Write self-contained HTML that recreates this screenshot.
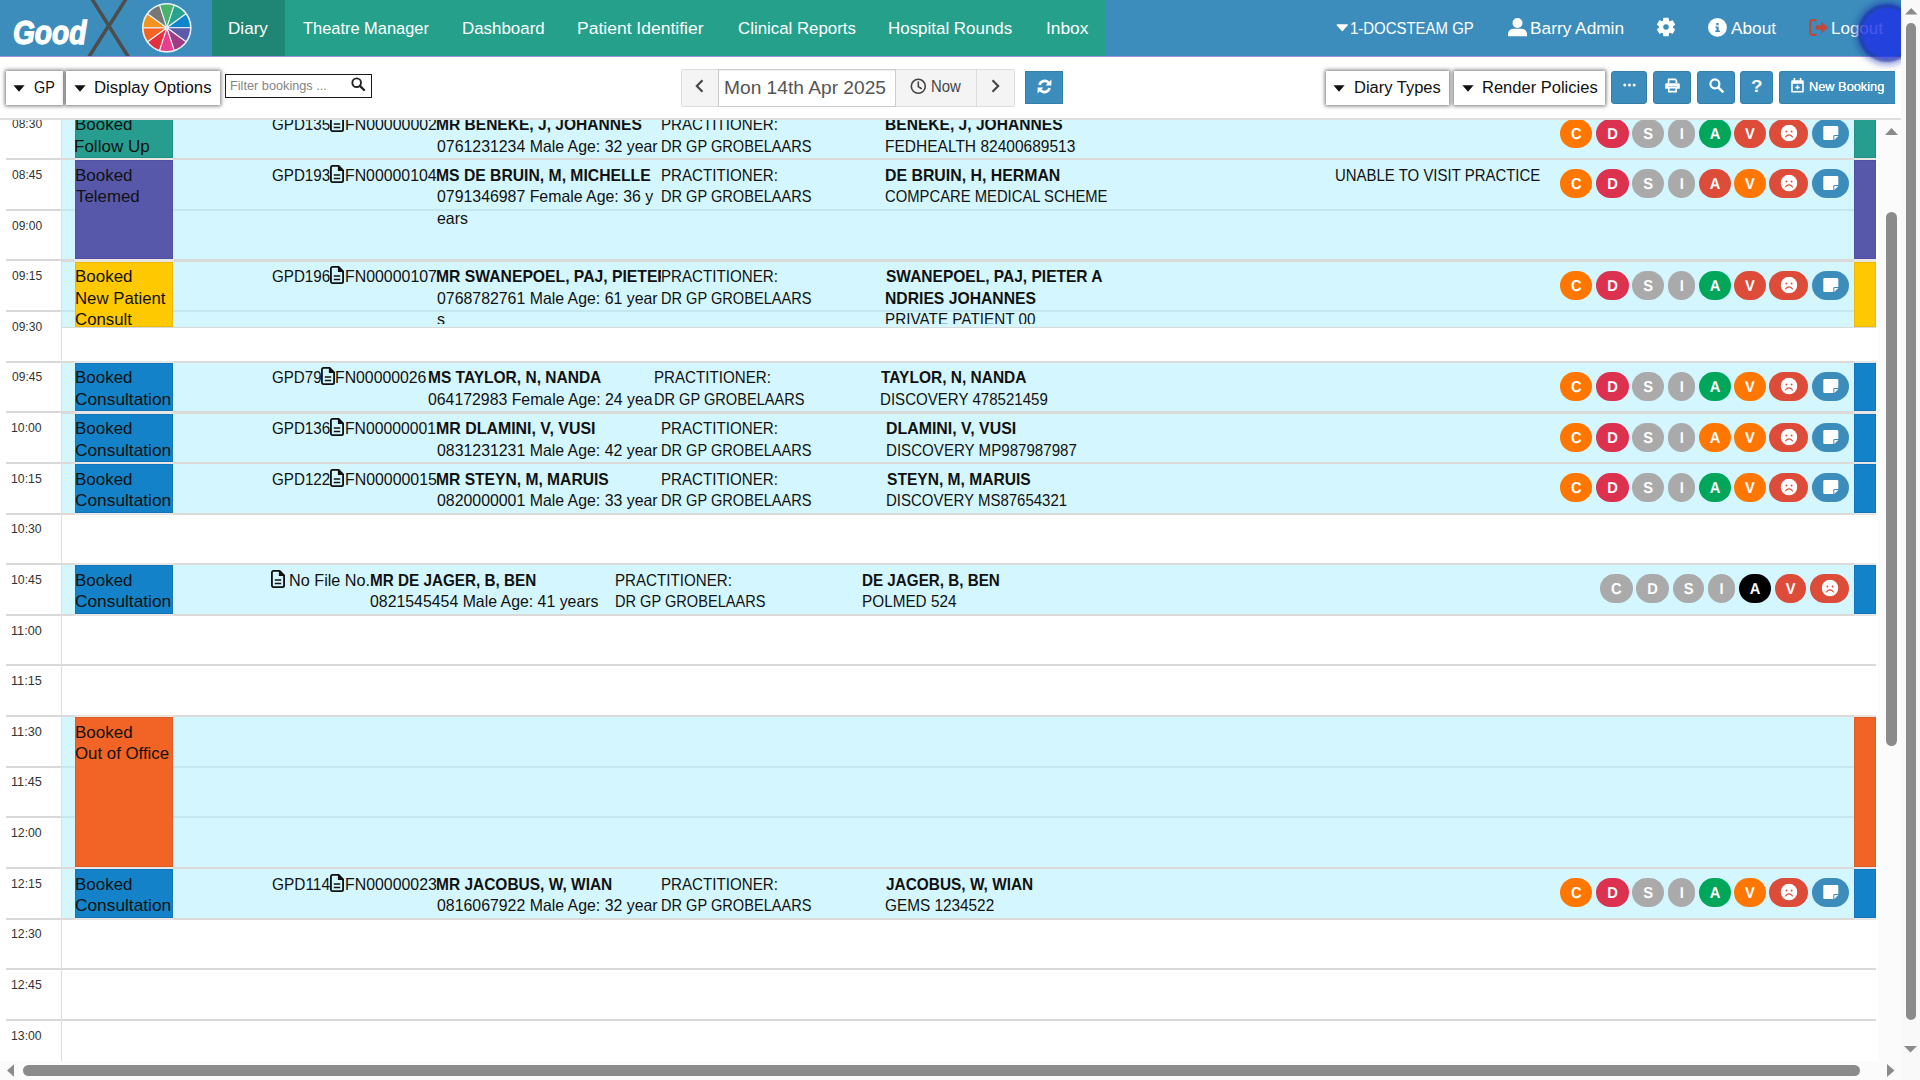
<!DOCTYPE html><html lang="en"><head><meta charset="utf-8"><title>GoodX Diary</title><style>
html,body{margin:0;padding:0;background:#fff}
body{width:1920px;height:1080px;overflow:hidden;position:relative;font-family:"Liberation Sans",sans-serif}
#app{position:absolute;left:0;top:0;width:1920px;height:1080px;overflow:hidden;background:#fff}
#main{position:absolute;left:0;top:0;width:1901px;height:1080px;overflow:hidden}
#grid{position:absolute;left:0;top:0;width:1901px;height:1061px;overflow:hidden}
.b{position:absolute;display:block}
.t{position:absolute;white-space:pre;line-height:24px;transform-origin:0 0;display:block}
.cl{position:absolute;overflow:hidden}
.bd{position:absolute;border-radius:14.5px;color:#fff;font-size:15.8px;line-height:29.6px;text-align:center}
.bd b{display:block;transform:scaleX(.93) rotate(.03deg)}
.bd svg{position:absolute;left:50%;top:50%;transform:translate(-50%,calc(-50% - .9px))}
.bd svg.nt{transform:translate(calc(-50% + .8px),calc(-50% - 1px))}
#blob{position:absolute;left:1862px;top:7.5px;width:50px;height:50px;border-radius:50%;background:#1c2fe6;box-shadow:0 0 2px 4px rgba(24,42,175,.85),0 0 5px 8px rgba(24,42,175,.42);opacity:.8}
</style></head><body><div id="app"><div id="main"><div id="grid"><div class="b" style="left:62.00px;top:110.00px;width:1814.00px;height:48.00px;background:#d4f7ff;"></div><div class="b" style="left:62.00px;top:160.00px;width:1814.00px;height:99.00px;background:#d4f7ff;"></div><div class="b" style="left:62.00px;top:261.00px;width:1814.00px;height:1.00px;background:#dcd9d9;"></div><div class="b" style="left:62.00px;top:262.00px;width:1814.00px;height:65.00px;background:#d4f7ff;"></div><div class="b" style="left:62.00px;top:327.00px;width:1814.00px;height:1.00px;background:#d9d9d9;"></div><div class="b" style="left:62.00px;top:363.00px;width:1814.00px;height:48.00px;background:#d4f7ff;"></div><div class="b" style="left:62.00px;top:413.00px;width:1814.00px;height:1.00px;background:#dcd9d9;"></div><div class="b" style="left:62.00px;top:414.00px;width:1814.00px;height:48.00px;background:#d4f7ff;"></div><div class="b" style="left:62.00px;top:464.00px;width:1814.00px;height:49.00px;background:#d4f7ff;"></div><div class="b" style="left:62.00px;top:565.00px;width:1814.00px;height:49.00px;background:#d4f7ff;"></div><div class="b" style="left:62.00px;top:717.00px;width:1814.00px;height:150.00px;background:#d4f7ff;"></div><div class="b" style="left:62.00px;top:869.00px;width:1814.00px;height:49.00px;background:#d4f7ff;"></div><div class="b" style="left:6.00px;top:108.00px;width:56.00px;height:2.00px;background:#d9d9d9;"></div><div class="b" style="left:62.00px;top:108.00px;width:1814.00px;height:2.00px;background:#dcd9d9;"></div><div class="b" style="left:75.00px;top:108.00px;width:98.00px;height:2.00px;background:#e9e5e3;"></div><div class="b" style="left:1854.00px;top:108.00px;width:22.00px;height:2.00px;background:#e9e5e3;"></div><div class="b" style="left:6.00px;top:158.00px;width:56.00px;height:2.00px;background:#d9d9d9;"></div><div class="b" style="left:62.00px;top:158.00px;width:1814.00px;height:2.00px;background:#dcd9d9;"></div><div class="b" style="left:75.00px;top:158.00px;width:98.00px;height:2.00px;background:#e9e5e3;"></div><div class="b" style="left:1854.00px;top:158.00px;width:22.00px;height:2.00px;background:#e9e5e3;"></div><div class="b" style="left:6.00px;top:209.00px;width:56.00px;height:2.00px;background:#d9d9d9;"></div><div class="b" style="left:62.00px;top:209.00px;width:1814.00px;height:2.00px;background:#d9d9d9;"></div><div class="b" style="left:6.00px;top:259.00px;width:56.00px;height:2.00px;background:#d9d9d9;"></div><div class="b" style="left:62.00px;top:259.00px;width:1814.00px;height:2.00px;background:#dcd9d9;"></div><div class="b" style="left:75.00px;top:259.00px;width:98.00px;height:3.00px;background:#e9e5e3;"></div><div class="b" style="left:1854.00px;top:259.00px;width:22.00px;height:3.00px;background:#e9e5e3;"></div><div class="b" style="left:6.00px;top:310.00px;width:56.00px;height:2.00px;background:#d9d9d9;"></div><div class="b" style="left:62.00px;top:310.00px;width:1814.00px;height:2.00px;background:#d9d9d9;"></div><div class="b" style="left:6.00px;top:361.00px;width:56.00px;height:2.00px;background:#d9d9d9;"></div><div class="b" style="left:62.00px;top:361.00px;width:1814.00px;height:2.00px;background:#dcd9d9;"></div><div class="b" style="left:75.00px;top:361.00px;width:98.00px;height:2.00px;background:#e9e5e3;"></div><div class="b" style="left:1854.00px;top:361.00px;width:22.00px;height:2.00px;background:#e9e5e3;"></div><div class="b" style="left:6.00px;top:411.00px;width:56.00px;height:2.00px;background:#d9d9d9;"></div><div class="b" style="left:62.00px;top:411.00px;width:1814.00px;height:2.00px;background:#dcd9d9;"></div><div class="b" style="left:75.00px;top:411.00px;width:98.00px;height:3.00px;background:#e9e5e3;"></div><div class="b" style="left:1854.00px;top:411.00px;width:22.00px;height:3.00px;background:#e9e5e3;"></div><div class="b" style="left:6.00px;top:462.00px;width:56.00px;height:2.00px;background:#d9d9d9;"></div><div class="b" style="left:62.00px;top:462.00px;width:1814.00px;height:2.00px;background:#dcd9d9;"></div><div class="b" style="left:75.00px;top:462.00px;width:98.00px;height:2.00px;background:#e9e5e3;"></div><div class="b" style="left:1854.00px;top:462.00px;width:22.00px;height:2.00px;background:#e9e5e3;"></div><div class="b" style="left:6.00px;top:513.00px;width:56.00px;height:2.00px;background:#d9d9d9;"></div><div class="b" style="left:62.00px;top:513.00px;width:1814.00px;height:2.00px;background:#dcd9d9;"></div><div class="b" style="left:75.00px;top:513.00px;width:98.00px;height:2.00px;background:#e9e5e3;"></div><div class="b" style="left:1854.00px;top:513.00px;width:22.00px;height:2.00px;background:#e9e5e3;"></div><div class="b" style="left:6.00px;top:563.00px;width:56.00px;height:2.00px;background:#d9d9d9;"></div><div class="b" style="left:62.00px;top:563.00px;width:1814.00px;height:2.00px;background:#dcd9d9;"></div><div class="b" style="left:75.00px;top:563.00px;width:98.00px;height:2.00px;background:#e9e5e3;"></div><div class="b" style="left:1854.00px;top:563.00px;width:22.00px;height:2.00px;background:#e9e5e3;"></div><div class="b" style="left:6.00px;top:614.00px;width:56.00px;height:2.00px;background:#d9d9d9;"></div><div class="b" style="left:62.00px;top:614.00px;width:1814.00px;height:2.00px;background:#dcd9d9;"></div><div class="b" style="left:75.00px;top:614.00px;width:98.00px;height:2.00px;background:#e9e5e3;"></div><div class="b" style="left:1854.00px;top:614.00px;width:22.00px;height:2.00px;background:#e9e5e3;"></div><div class="b" style="left:6.00px;top:664.00px;width:56.00px;height:2.00px;background:#d9d9d9;"></div><div class="b" style="left:62.00px;top:664.00px;width:1814.00px;height:2.00px;background:#d9d9d9;"></div><div class="b" style="left:6.00px;top:715.00px;width:56.00px;height:2.00px;background:#d9d9d9;"></div><div class="b" style="left:62.00px;top:715.00px;width:1814.00px;height:2.00px;background:#dcd9d9;"></div><div class="b" style="left:75.00px;top:715.00px;width:98.00px;height:2.00px;background:#e9e5e3;"></div><div class="b" style="left:1854.00px;top:715.00px;width:22.00px;height:2.00px;background:#e9e5e3;"></div><div class="b" style="left:6.00px;top:766.00px;width:56.00px;height:2.00px;background:#d9d9d9;"></div><div class="b" style="left:62.00px;top:766.00px;width:1814.00px;height:2.00px;background:#d9d9d9;"></div><div class="b" style="left:6.00px;top:816.00px;width:56.00px;height:2.00px;background:#d9d9d9;"></div><div class="b" style="left:62.00px;top:816.00px;width:1814.00px;height:2.00px;background:#d9d9d9;"></div><div class="b" style="left:6.00px;top:867.00px;width:56.00px;height:2.00px;background:#d9d9d9;"></div><div class="b" style="left:62.00px;top:867.00px;width:1814.00px;height:2.00px;background:#dcd9d9;"></div><div class="b" style="left:75.00px;top:867.00px;width:98.00px;height:2.00px;background:#e9e5e3;"></div><div class="b" style="left:1854.00px;top:867.00px;width:22.00px;height:2.00px;background:#e9e5e3;"></div><div class="b" style="left:6.00px;top:918.00px;width:56.00px;height:2.00px;background:#d9d9d9;"></div><div class="b" style="left:62.00px;top:918.00px;width:1814.00px;height:2.00px;background:#dcd9d9;"></div><div class="b" style="left:75.00px;top:918.00px;width:98.00px;height:2.00px;background:#e9e5e3;"></div><div class="b" style="left:1854.00px;top:918.00px;width:22.00px;height:2.00px;background:#e9e5e3;"></div><div class="b" style="left:6.00px;top:968.00px;width:56.00px;height:2.00px;background:#d9d9d9;"></div><div class="b" style="left:62.00px;top:968.00px;width:1814.00px;height:2.00px;background:#d9d9d9;"></div><div class="b" style="left:6.00px;top:1019.00px;width:56.00px;height:2.00px;background:#d9d9d9;"></div><div class="b" style="left:62.00px;top:1019.00px;width:1814.00px;height:2.00px;background:#d9d9d9;"></div><div class="b" style="left:62.00px;top:209.00px;width:1814.00px;height:2.00px;background:#c5e7ee;"></div><div class="b" style="left:62.00px;top:310.00px;width:1814.00px;height:2.00px;background:#c5e7ee;"></div><div class="b" style="left:62.00px;top:766.00px;width:1814.00px;height:2.00px;background:#c5e7ee;"></div><div class="b" style="left:62.00px;top:816.00px;width:1814.00px;height:2.00px;background:#c5e7ee;"></div><div class="b" style="left:75.00px;top:110.00px;width:98.00px;height:48.00px;background:#269d8f;box-shadow:inset 0 0 0 1px rgba(0,0,70,.08);"></div><div class="b" style="left:1854.00px;top:110.00px;width:22.00px;height:48.00px;background:#269d8f;box-shadow:inset 0 0 0 1px rgba(0,0,70,.08);"></div><div class="b" style="left:75.00px;top:160.00px;width:98.00px;height:99.00px;background:#5858aa;box-shadow:inset 0 0 0 1px rgba(0,0,70,.08);"></div><div class="b" style="left:1854.00px;top:160.00px;width:22.00px;height:99.00px;background:#5858aa;box-shadow:inset 0 0 0 1px rgba(0,0,70,.08);"></div><div class="b" style="left:75.00px;top:262.00px;width:98.00px;height:65.00px;background:#ffc902;box-shadow:inset 0 0 0 1px rgba(0,0,70,.08);"></div><div class="b" style="left:1854.00px;top:262.00px;width:22.00px;height:65.00px;background:#ffc902;box-shadow:inset 0 0 0 1px rgba(0,0,70,.08);"></div><div class="b" style="left:75.00px;top:363.00px;width:98.00px;height:48.00px;background:#1482c8;box-shadow:inset 0 0 0 1px rgba(0,0,70,.08);"></div><div class="b" style="left:1854.00px;top:363.00px;width:22.00px;height:48.00px;background:#1482c8;box-shadow:inset 0 0 0 1px rgba(0,0,70,.08);"></div><div class="b" style="left:75.00px;top:414.00px;width:98.00px;height:48.00px;background:#1482c8;box-shadow:inset 0 0 0 1px rgba(0,0,70,.08);"></div><div class="b" style="left:1854.00px;top:414.00px;width:22.00px;height:48.00px;background:#1482c8;box-shadow:inset 0 0 0 1px rgba(0,0,70,.08);"></div><div class="b" style="left:75.00px;top:464.00px;width:98.00px;height:49.00px;background:#1482c8;box-shadow:inset 0 0 0 1px rgba(0,0,70,.08);"></div><div class="b" style="left:1854.00px;top:464.00px;width:22.00px;height:49.00px;background:#1482c8;box-shadow:inset 0 0 0 1px rgba(0,0,70,.08);"></div><div class="b" style="left:75.00px;top:565.00px;width:98.00px;height:49.00px;background:#1482c8;box-shadow:inset 0 0 0 1px rgba(0,0,70,.08);"></div><div class="b" style="left:1854.00px;top:565.00px;width:22.00px;height:49.00px;background:#1482c8;box-shadow:inset 0 0 0 1px rgba(0,0,70,.08);"></div><div class="b" style="left:75.00px;top:717.00px;width:98.00px;height:150.00px;background:#f16426;box-shadow:inset 0 0 0 1px rgba(0,0,70,.08);"></div><div class="b" style="left:1854.00px;top:717.00px;width:22.00px;height:150.00px;background:#f16426;box-shadow:inset 0 0 0 1px rgba(0,0,70,.08);"></div><div class="b" style="left:75.00px;top:869.00px;width:98.00px;height:49.00px;background:#1482c8;box-shadow:inset 0 0 0 1px rgba(0,0,70,.08);"></div><div class="b" style="left:1854.00px;top:869.00px;width:22.00px;height:49.00px;background:#1482c8;box-shadow:inset 0 0 0 1px rgba(0,0,70,.08);"></div><div class="b" style="left:61.00px;top:120.00px;width:1.00px;height:941.00px;background:#ddd;"></div><svg class="b" style="left:329.90px;top:114.00px" width="14" height="18" viewBox="0 0 14 18"><path d="M0.9 2.6A1.7 1.7 0 0 1 2.6 0.9H8.6L13.1 5.4V15.4A1.7 1.7 0 0 1 11.4 17.1H2.6A1.7 1.7 0 0 1 0.9 15.4Z" fill="none" stroke="#111" stroke-width="1.85"/><path d="M7.9 0.6V6.1H13.4Z" fill="#111"/><path d="M3.8 10h6.4M3.8 13.4h6.4" stroke="#111" stroke-width="1.5"/></svg><div class="bd" style="left:1559.70px;top:119px;width:32.40px;height:29px;background:#ff7701"><b>C</b></div><div class="bd" style="left:1595.90px;top:119px;width:33.20px;height:29px;background:#dd3150"><b>D</b></div><div class="bd" style="left:1631.90px;top:119px;width:32.20px;height:29px;background:#aaaaaa"><b>S</b></div><div class="bd" style="left:1667.90px;top:119px;width:27.40px;height:29px;background:#aaaaaa"><b>I</b></div><div class="bd" style="left:1699.05px;top:119px;width:31.90px;height:29px;background:#00a65a"><b>A</b></div><div class="bd" style="left:1734.00px;top:119px;width:32.00px;height:29px;background:#dd4b39"><b>V</b></div><div class="bd" style="left:1769.10px;top:119px;width:39.00px;height:29px;background:#dd4b39"><svg width="17" height="17" viewBox="0 0 17 17"><circle cx="8.5" cy="8.5" r="8.3" fill="#fff"/><circle cx="5.9" cy="6.9" r="0.95" fill="#dd4b39"/><circle cx="11.1" cy="6.9" r="0.95" fill="#dd4b39"/><path d="M4.9 12.4Q8.5 8.2 12.1 12.4" fill="none" stroke="#dd4b39" stroke-width="1.1" stroke-linecap="round"/></svg></div><div class="bd" style="left:1811.95px;top:119px;width:37.10px;height:29px;background:#3c8dbc"><svg class="nt" width="15.4" height="14" viewBox="0 0 15 14"><path d="M1.3 0H13.7A1.3 1.3 0 0 1 15 1.3V9H11.3A1.3 1.3 0 0 0 10 10.3V14H1.3A1.3 1.3 0 0 1 0 12.7V1.3A1.3 1.3 0 0 1 1.3 0Z" fill="#fff"/><path d="M11 14V10.6A0.6 0.6 0 0 1 11.6 10H15Z" fill="#fff"/></svg></div><svg class="b" style="left:329.90px;top:165.00px" width="14" height="18" viewBox="0 0 14 18"><path d="M0.9 2.6A1.7 1.7 0 0 1 2.6 0.9H8.6L13.1 5.4V15.4A1.7 1.7 0 0 1 11.4 17.1H2.6A1.7 1.7 0 0 1 0.9 15.4Z" fill="none" stroke="#111" stroke-width="1.85"/><path d="M7.9 0.6V6.1H13.4Z" fill="#111"/><path d="M3.8 10h6.4M3.8 13.4h6.4" stroke="#111" stroke-width="1.5"/></svg><div class="bd" style="left:1559.70px;top:169px;width:32.40px;height:29px;background:#ff7701"><b>C</b></div><div class="bd" style="left:1595.90px;top:169px;width:33.20px;height:29px;background:#dd3150"><b>D</b></div><div class="bd" style="left:1631.90px;top:169px;width:32.20px;height:29px;background:#aaaaaa"><b>S</b></div><div class="bd" style="left:1667.90px;top:169px;width:27.40px;height:29px;background:#aaaaaa"><b>I</b></div><div class="bd" style="left:1699.05px;top:169px;width:31.90px;height:29px;background:#dd4b39"><b>A</b></div><div class="bd" style="left:1734.00px;top:169px;width:32.00px;height:29px;background:#ff7701"><b>V</b></div><div class="bd" style="left:1769.10px;top:169px;width:39.00px;height:29px;background:#dd4b39"><svg width="17" height="17" viewBox="0 0 17 17"><circle cx="8.5" cy="8.5" r="8.3" fill="#fff"/><circle cx="5.9" cy="6.9" r="0.95" fill="#dd4b39"/><circle cx="11.1" cy="6.9" r="0.95" fill="#dd4b39"/><path d="M4.9 12.4Q8.5 8.2 12.1 12.4" fill="none" stroke="#dd4b39" stroke-width="1.1" stroke-linecap="round"/></svg></div><div class="bd" style="left:1811.95px;top:169px;width:37.10px;height:29px;background:#3c8dbc"><svg class="nt" width="15.4" height="14" viewBox="0 0 15 14"><path d="M1.3 0H13.7A1.3 1.3 0 0 1 15 1.3V9H11.3A1.3 1.3 0 0 0 10 10.3V14H1.3A1.3 1.3 0 0 1 0 12.7V1.3A1.3 1.3 0 0 1 1.3 0Z" fill="#fff"/><path d="M11 14V10.6A0.6 0.6 0 0 1 11.6 10H15Z" fill="#fff"/></svg></div><svg class="b" style="left:329.90px;top:266.00px" width="14" height="18" viewBox="0 0 14 18"><path d="M0.9 2.6A1.7 1.7 0 0 1 2.6 0.9H8.6L13.1 5.4V15.4A1.7 1.7 0 0 1 11.4 17.1H2.6A1.7 1.7 0 0 1 0.9 15.4Z" fill="none" stroke="#111" stroke-width="1.85"/><path d="M7.9 0.6V6.1H13.4Z" fill="#111"/><path d="M3.8 10h6.4M3.8 13.4h6.4" stroke="#111" stroke-width="1.5"/></svg><div class="bd" style="left:1559.70px;top:271px;width:32.40px;height:29px;background:#ff7701"><b>C</b></div><div class="bd" style="left:1595.90px;top:271px;width:33.20px;height:29px;background:#dd3150"><b>D</b></div><div class="bd" style="left:1631.90px;top:271px;width:32.20px;height:29px;background:#aaaaaa"><b>S</b></div><div class="bd" style="left:1667.90px;top:271px;width:27.40px;height:29px;background:#aaaaaa"><b>I</b></div><div class="bd" style="left:1699.05px;top:271px;width:31.90px;height:29px;background:#00a65a"><b>A</b></div><div class="bd" style="left:1734.00px;top:271px;width:32.00px;height:29px;background:#dd4b39"><b>V</b></div><div class="bd" style="left:1769.10px;top:271px;width:39.00px;height:29px;background:#dd4b39"><svg width="17" height="17" viewBox="0 0 17 17"><circle cx="8.5" cy="8.5" r="8.3" fill="#fff"/><circle cx="5.9" cy="6.9" r="0.95" fill="#dd4b39"/><circle cx="11.1" cy="6.9" r="0.95" fill="#dd4b39"/><path d="M4.9 12.4Q8.5 8.2 12.1 12.4" fill="none" stroke="#dd4b39" stroke-width="1.1" stroke-linecap="round"/></svg></div><div class="bd" style="left:1811.95px;top:271px;width:37.10px;height:29px;background:#3c8dbc"><svg class="nt" width="15.4" height="14" viewBox="0 0 15 14"><path d="M1.3 0H13.7A1.3 1.3 0 0 1 15 1.3V9H11.3A1.3 1.3 0 0 0 10 10.3V14H1.3A1.3 1.3 0 0 1 0 12.7V1.3A1.3 1.3 0 0 1 1.3 0Z" fill="#fff"/><path d="M11 14V10.6A0.6 0.6 0 0 1 11.6 10H15Z" fill="#fff"/></svg></div><svg class="b" style="left:321.15px;top:367.00px" width="14" height="18" viewBox="0 0 14 18"><path d="M0.9 2.6A1.7 1.7 0 0 1 2.6 0.9H8.6L13.1 5.4V15.4A1.7 1.7 0 0 1 11.4 17.1H2.6A1.7 1.7 0 0 1 0.9 15.4Z" fill="none" stroke="#111" stroke-width="1.85"/><path d="M7.9 0.6V6.1H13.4Z" fill="#111"/><path d="M3.8 10h6.4M3.8 13.4h6.4" stroke="#111" stroke-width="1.5"/></svg><div class="bd" style="left:1559.70px;top:372px;width:32.40px;height:29px;background:#ff7701"><b>C</b></div><div class="bd" style="left:1595.90px;top:372px;width:33.20px;height:29px;background:#dd3150"><b>D</b></div><div class="bd" style="left:1631.90px;top:372px;width:32.20px;height:29px;background:#aaaaaa"><b>S</b></div><div class="bd" style="left:1667.90px;top:372px;width:27.40px;height:29px;background:#aaaaaa"><b>I</b></div><div class="bd" style="left:1699.05px;top:372px;width:31.90px;height:29px;background:#00a65a"><b>A</b></div><div class="bd" style="left:1734.00px;top:372px;width:32.00px;height:29px;background:#ff7701"><b>V</b></div><div class="bd" style="left:1769.10px;top:372px;width:39.00px;height:29px;background:#dd4b39"><svg width="17" height="17" viewBox="0 0 17 17"><circle cx="8.5" cy="8.5" r="8.3" fill="#fff"/><circle cx="5.9" cy="6.9" r="0.95" fill="#dd4b39"/><circle cx="11.1" cy="6.9" r="0.95" fill="#dd4b39"/><path d="M4.9 12.4Q8.5 8.2 12.1 12.4" fill="none" stroke="#dd4b39" stroke-width="1.1" stroke-linecap="round"/></svg></div><div class="bd" style="left:1811.95px;top:372px;width:37.10px;height:29px;background:#3c8dbc"><svg class="nt" width="15.4" height="14" viewBox="0 0 15 14"><path d="M1.3 0H13.7A1.3 1.3 0 0 1 15 1.3V9H11.3A1.3 1.3 0 0 0 10 10.3V14H1.3A1.3 1.3 0 0 1 0 12.7V1.3A1.3 1.3 0 0 1 1.3 0Z" fill="#fff"/><path d="M11 14V10.6A0.6 0.6 0 0 1 11.6 10H15Z" fill="#fff"/></svg></div><svg class="b" style="left:329.90px;top:418.00px" width="14" height="18" viewBox="0 0 14 18"><path d="M0.9 2.6A1.7 1.7 0 0 1 2.6 0.9H8.6L13.1 5.4V15.4A1.7 1.7 0 0 1 11.4 17.1H2.6A1.7 1.7 0 0 1 0.9 15.4Z" fill="none" stroke="#111" stroke-width="1.85"/><path d="M7.9 0.6V6.1H13.4Z" fill="#111"/><path d="M3.8 10h6.4M3.8 13.4h6.4" stroke="#111" stroke-width="1.5"/></svg><div class="bd" style="left:1559.70px;top:423px;width:32.40px;height:29px;background:#ff7701"><b>C</b></div><div class="bd" style="left:1595.90px;top:423px;width:33.20px;height:29px;background:#dd3150"><b>D</b></div><div class="bd" style="left:1631.90px;top:423px;width:32.20px;height:29px;background:#aaaaaa"><b>S</b></div><div class="bd" style="left:1667.90px;top:423px;width:27.40px;height:29px;background:#aaaaaa"><b>I</b></div><div class="bd" style="left:1699.05px;top:423px;width:31.90px;height:29px;background:#ff7701"><b>A</b></div><div class="bd" style="left:1734.00px;top:423px;width:32.00px;height:29px;background:#ff7701"><b>V</b></div><div class="bd" style="left:1769.10px;top:423px;width:39.00px;height:29px;background:#dd4b39"><svg width="17" height="17" viewBox="0 0 17 17"><circle cx="8.5" cy="8.5" r="8.3" fill="#fff"/><circle cx="5.9" cy="6.9" r="0.95" fill="#dd4b39"/><circle cx="11.1" cy="6.9" r="0.95" fill="#dd4b39"/><path d="M4.9 12.4Q8.5 8.2 12.1 12.4" fill="none" stroke="#dd4b39" stroke-width="1.1" stroke-linecap="round"/></svg></div><div class="bd" style="left:1811.95px;top:423px;width:37.10px;height:29px;background:#3c8dbc"><svg class="nt" width="15.4" height="14" viewBox="0 0 15 14"><path d="M1.3 0H13.7A1.3 1.3 0 0 1 15 1.3V9H11.3A1.3 1.3 0 0 0 10 10.3V14H1.3A1.3 1.3 0 0 1 0 12.7V1.3A1.3 1.3 0 0 1 1.3 0Z" fill="#fff"/><path d="M11 14V10.6A0.6 0.6 0 0 1 11.6 10H15Z" fill="#fff"/></svg></div><svg class="b" style="left:329.90px;top:469.00px" width="14" height="18" viewBox="0 0 14 18"><path d="M0.9 2.6A1.7 1.7 0 0 1 2.6 0.9H8.6L13.1 5.4V15.4A1.7 1.7 0 0 1 11.4 17.1H2.6A1.7 1.7 0 0 1 0.9 15.4Z" fill="none" stroke="#111" stroke-width="1.85"/><path d="M7.9 0.6V6.1H13.4Z" fill="#111"/><path d="M3.8 10h6.4M3.8 13.4h6.4" stroke="#111" stroke-width="1.5"/></svg><div class="bd" style="left:1559.70px;top:473px;width:32.40px;height:29px;background:#ff7701"><b>C</b></div><div class="bd" style="left:1595.90px;top:473px;width:33.20px;height:29px;background:#dd3150"><b>D</b></div><div class="bd" style="left:1631.90px;top:473px;width:32.20px;height:29px;background:#aaaaaa"><b>S</b></div><div class="bd" style="left:1667.90px;top:473px;width:27.40px;height:29px;background:#aaaaaa"><b>I</b></div><div class="bd" style="left:1699.05px;top:473px;width:31.90px;height:29px;background:#00a65a"><b>A</b></div><div class="bd" style="left:1734.00px;top:473px;width:32.00px;height:29px;background:#ff7701"><b>V</b></div><div class="bd" style="left:1769.10px;top:473px;width:39.00px;height:29px;background:#dd4b39"><svg width="17" height="17" viewBox="0 0 17 17"><circle cx="8.5" cy="8.5" r="8.3" fill="#fff"/><circle cx="5.9" cy="6.9" r="0.95" fill="#dd4b39"/><circle cx="11.1" cy="6.9" r="0.95" fill="#dd4b39"/><path d="M4.9 12.4Q8.5 8.2 12.1 12.4" fill="none" stroke="#dd4b39" stroke-width="1.1" stroke-linecap="round"/></svg></div><div class="bd" style="left:1811.95px;top:473px;width:37.10px;height:29px;background:#3c8dbc"><svg class="nt" width="15.4" height="14" viewBox="0 0 15 14"><path d="M1.3 0H13.7A1.3 1.3 0 0 1 15 1.3V9H11.3A1.3 1.3 0 0 0 10 10.3V14H1.3A1.3 1.3 0 0 1 0 12.7V1.3A1.3 1.3 0 0 1 1.3 0Z" fill="#fff"/><path d="M11 14V10.6A0.6 0.6 0 0 1 11.6 10H15Z" fill="#fff"/></svg></div><svg class="b" style="left:270.60px;top:570.00px" width="14" height="18" viewBox="0 0 14 18"><path d="M0.9 2.6A1.7 1.7 0 0 1 2.6 0.9H8.6L13.1 5.4V15.4A1.7 1.7 0 0 1 11.4 17.1H2.6A1.7 1.7 0 0 1 0.9 15.4Z" fill="none" stroke="#111" stroke-width="1.85"/><path d="M7.9 0.6V6.1H13.4Z" fill="#111"/><path d="M3.8 10h6.4M3.8 13.4h6.4" stroke="#111" stroke-width="1.5"/></svg><div class="bd" style="left:1600.00px;top:574px;width:32.80px;height:29px;background:#aaaaaa"><b>C</b></div><div class="bd" style="left:1636.00px;top:574px;width:33.00px;height:29px;background:#aaaaaa"><b>D</b></div><div class="bd" style="left:1672.75px;top:574px;width:31.30px;height:29px;background:#aaaaaa"><b>S</b></div><div class="bd" style="left:1707.80px;top:574px;width:27.20px;height:29px;background:#aaaaaa"><b>I</b></div><div class="bd" style="left:1738.85px;top:574px;width:32.30px;height:29px;background:#000000"><b>A</b></div><div class="bd" style="left:1774.95px;top:574px;width:31.30px;height:29px;background:#dd4b39"><b>V</b></div><div class="bd" style="left:1810.00px;top:574px;width:39.00px;height:29px;background:#dd4b39"><svg width="17" height="17" viewBox="0 0 17 17"><circle cx="8.5" cy="8.5" r="8.3" fill="#fff"/><circle cx="5.9" cy="6.9" r="0.95" fill="#dd4b39"/><circle cx="11.1" cy="6.9" r="0.95" fill="#dd4b39"/><path d="M4.9 12.4Q8.5 8.2 12.1 12.4" fill="none" stroke="#dd4b39" stroke-width="1.1" stroke-linecap="round"/></svg></div><svg class="b" style="left:329.90px;top:874.00px" width="14" height="18" viewBox="0 0 14 18"><path d="M0.9 2.6A1.7 1.7 0 0 1 2.6 0.9H8.6L13.1 5.4V15.4A1.7 1.7 0 0 1 11.4 17.1H2.6A1.7 1.7 0 0 1 0.9 15.4Z" fill="none" stroke="#111" stroke-width="1.85"/><path d="M7.9 0.6V6.1H13.4Z" fill="#111"/><path d="M3.8 10h6.4M3.8 13.4h6.4" stroke="#111" stroke-width="1.5"/></svg><div class="bd" style="left:1559.70px;top:878px;width:32.40px;height:29px;background:#ff7701"><b>C</b></div><div class="bd" style="left:1595.90px;top:878px;width:33.20px;height:29px;background:#dd3150"><b>D</b></div><div class="bd" style="left:1631.90px;top:878px;width:32.20px;height:29px;background:#aaaaaa"><b>S</b></div><div class="bd" style="left:1667.90px;top:878px;width:27.40px;height:29px;background:#aaaaaa"><b>I</b></div><div class="bd" style="left:1699.05px;top:878px;width:31.90px;height:29px;background:#00a65a"><b>A</b></div><div class="bd" style="left:1734.00px;top:878px;width:32.00px;height:29px;background:#ff7701"><b>V</b></div><div class="bd" style="left:1769.10px;top:878px;width:39.00px;height:29px;background:#dd4b39"><svg width="17" height="17" viewBox="0 0 17 17"><circle cx="8.5" cy="8.5" r="8.3" fill="#fff"/><circle cx="5.9" cy="6.9" r="0.95" fill="#dd4b39"/><circle cx="11.1" cy="6.9" r="0.95" fill="#dd4b39"/><path d="M4.9 12.4Q8.5 8.2 12.1 12.4" fill="none" stroke="#dd4b39" stroke-width="1.1" stroke-linecap="round"/></svg></div><div class="bd" style="left:1811.95px;top:878px;width:37.10px;height:29px;background:#3c8dbc"><svg class="nt" width="15.4" height="14" viewBox="0 0 15 14"><path d="M1.3 0H13.7A1.3 1.3 0 0 1 15 1.3V9H11.3A1.3 1.3 0 0 0 10 10.3V14H1.3A1.3 1.3 0 0 1 0 12.7V1.3A1.3 1.3 0 0 1 1.3 0Z" fill="#fff"/><path d="M11 14V10.6A0.6 0.6 0 0 1 11.6 10H15Z" fill="#fff"/></svg></div><div class="b" style="left:61.00px;top:120.00px;width:1.00px;height:941.00px;background:#dedede;"></div><span class="t" style="left:11.57px;top:112px;font-size:12.7px;transform:scaleX(0.9470);color:#333;">08:30</span><span class="t" style="left:11.57px;top:163px;font-size:12.7px;transform:scaleX(0.9490);color:#333;">08:45</span><span class="t" style="left:11.57px;top:214px;font-size:12.7px;transform:scaleX(0.9470);color:#333;">09:00</span><span class="t" style="left:11.57px;top:264px;font-size:12.7px;transform:scaleX(0.9490);color:#333;">09:15</span><span class="t" style="left:11.57px;top:315px;font-size:12.7px;transform:scaleX(0.9470);color:#333;">09:30</span><span class="t" style="left:11.57px;top:365px;font-size:12.7px;transform:scaleX(0.9490);color:#333;">09:45</span><span class="t" style="left:10.95px;top:416px;font-size:12.7px;transform:scaleX(0.9668);color:#333;">10:00</span><span class="t" style="left:10.95px;top:467px;font-size:12.7px;transform:scaleX(0.9689);color:#333;">10:15</span><span class="t" style="left:10.95px;top:517px;font-size:12.7px;transform:scaleX(0.9668);color:#333;">10:30</span><span class="t" style="left:10.95px;top:568px;font-size:12.7px;transform:scaleX(0.9689);color:#333;">10:45</span><span class="t" style="left:10.95px;top:619px;font-size:12.7px;transform:scaleX(0.9971);color:#333;">11:00</span><span class="t" style="left:10.95px;top:669px;font-size:12.7px;transform:scaleX(1.0005);color:#333;">11:15</span><span class="t" style="left:10.95px;top:720px;font-size:12.7px;transform:scaleX(0.9971);color:#333;">11:30</span><span class="t" style="left:10.95px;top:770px;font-size:12.7px;transform:scaleX(1.0005);color:#333;">11:45</span><span class="t" style="left:10.95px;top:821px;font-size:12.7px;transform:scaleX(0.9668);color:#333;">12:00</span><span class="t" style="left:10.95px;top:872px;font-size:12.7px;transform:scaleX(0.9689);color:#333;">12:15</span><span class="t" style="left:10.95px;top:922px;font-size:12.7px;transform:scaleX(0.9668);color:#333;">12:30</span><span class="t" style="left:10.95px;top:973px;font-size:12.7px;transform:scaleX(0.9689);color:#333;">12:45</span><span class="t" style="left:10.95px;top:1024px;font-size:12.7px;transform:scaleX(0.9668);color:#333;">13:00</span><span class="t" style="left:74.51px;top:112px;font-size:16.5px;transform:scaleX(1.0276);color:#111;">Booked</span><span class="t" style="left:74.47px;top:134px;font-size:16.5px;transform:scaleX(1.0316);color:#111;">Follow Up</span><span class="t" style="left:271.79px;top:112px;font-size:16.5px;transform:scaleX(0.9186);color:#111;">GPD135</span><span class="t" style="left:344.64px;top:112px;font-size:16.5px;transform:scaleX(0.9635);color:#111;">FN00000002</span><div class="cl" style="left:434px;top:95px;width:226.50px;height:58.00px"><span class="t" style="left:2.36px;top:17px;font-size:16.5px;transform:scaleX(0.9430);font-weight:bold;color:#111;">MR BENEKE, J, JOHANNES</span></div><div class="cl" style="left:434px;top:117px;width:224.20px;height:58.00px"><span class="t" style="left:2.72px;top:17px;font-size:16.5px;transform:scaleX(0.9617);color:#111;">0761231234 Male Age: 32 years</span></div><span class="t" style="left:661.26px;top:112px;font-size:16.5px;transform:scaleX(0.9173);color:#111;">PRACTITIONER:</span><span class="t" style="left:661.31px;top:134px;font-size:16.5px;transform:scaleX(0.8839);color:#111;">DR GP GROBELAARS</span><span class="t" style="left:885.35px;top:112px;font-size:16.5px;transform:scaleX(0.9445);font-weight:bold;color:#111;">BENEKE, J, JOHANNES</span><span class="t" style="left:885.20px;top:134px;font-size:16.5px;transform:scaleX(0.9401);color:#111;">FEDHEALTH 82400689513</span><span class="t" style="left:74.51px;top:163px;font-size:16.5px;transform:scaleX(1.0276);color:#111;">Booked</span><span class="t" style="left:75.53px;top:184px;font-size:16.5px;transform:scaleX(1.0215);color:#111;">Telemed</span><span class="t" style="left:271.79px;top:163px;font-size:16.5px;transform:scaleX(0.9190);color:#111;">GPD193</span><span class="t" style="left:344.65px;top:163px;font-size:16.5px;transform:scaleX(0.9597);color:#111;">FN00000104</span><div class="cl" style="left:434px;top:146px;width:226.50px;height:58.00px"><span class="t" style="left:2.35px;top:17px;font-size:16.5px;transform:scaleX(0.9518);font-weight:bold;color:#111;">MS DE BRUIN, M, MICHELLE</span></div><div class="cl" style="left:434px;top:167px;width:224.20px;height:58.00px"><span class="t" style="left:2.72px;top:17px;font-size:16.5px;transform:scaleX(0.9617);color:#111;">0791346987 Female Age: 36 y</span></div><span class="t" style="left:661.26px;top:163px;font-size:16.5px;transform:scaleX(0.9173);color:#111;">PRACTITIONER:</span><span class="t" style="left:661.31px;top:184px;font-size:16.5px;transform:scaleX(0.8839);color:#111;">DR GP GROBELAARS</span><span class="t" style="left:885.34px;top:163px;font-size:16.5px;transform:scaleX(0.9609);font-weight:bold;color:#111;">DE BRUIN, H, HERMAN</span><span class="t" style="left:885.29px;top:184px;font-size:16.5px;transform:scaleX(0.8977);color:#111;">COMPCARE MEDICAL SCHEME</span><span class="t" style="left:436.69px;top:206px;font-size:16.5px;transform:scaleX(0.9645);color:#111;">ears</span><span class="t" style="left:1334.84px;top:163px;font-size:16.5px;transform:scaleX(0.9064);color:#111;">UNABLE TO VISIT PRACTICE</span><span class="t" style="left:74.51px;top:264px;font-size:16.5px;transform:scaleX(1.0276);color:#111;">Booked</span><span class="t" style="left:74.51px;top:286px;font-size:16.5px;transform:scaleX(1.0169);color:#111;">New Patient</span><div class="cl" style="left:72px;top:290px;width:600.00px;height:35.00px"><span class="t" style="left:2.78px;top:17px;font-size:16.5px;transform:scaleX(1.0180);color:#111;">Consult</span></div><span class="t" style="left:271.79px;top:264px;font-size:16.5px;transform:scaleX(0.9192);color:#111;">GPD196</span><span class="t" style="left:344.64px;top:264px;font-size:16.5px;transform:scaleX(0.9635);color:#111;">FN00000107</span><div class="cl" style="left:434px;top:247px;width:226.80px;height:58.00px"><span class="t" style="left:2.35px;top:17px;font-size:16.5px;transform:scaleX(0.9518);font-weight:bold;color:#111;">MR SWANEPOEL, PAJ, PIETER ANDRIES JOHANNES</span></div><div class="cl" style="left:434px;top:269px;width:224.50px;height:58.00px"><span class="t" style="left:2.72px;top:17px;font-size:16.5px;transform:scaleX(0.9617);color:#111;">0768782761 Male Age: 61 year</span></div><span class="t" style="left:661.26px;top:264px;font-size:16.5px;transform:scaleX(0.9173);color:#111;">PRACTITIONER:</span><span class="t" style="left:661.31px;top:286px;font-size:16.5px;transform:scaleX(0.8839);color:#111;">DR GP GROBELAARS</span><span class="t" style="left:885.65px;top:264px;font-size:16.5px;transform:scaleX(0.9407);font-weight:bold;color:#111;">SWANEPOEL, PAJ, PIETER A</span><div class="cl" style="left:434px;top:290px;width:600.00px;height:34.00px"><span class="t" style="left:2.63px;top:17px;font-size:16.5px;transform:scaleX(0.9700);color:#111;">s</span></div><span class="t" style="left:885.35px;top:286px;font-size:16.5px;transform:scaleX(0.9518);font-weight:bold;color:#111;">NDRIES JOHANNES</span><div class="cl" style="left:883px;top:290px;width:600.00px;height:34.00px"><span class="t" style="left:2.22px;top:17px;font-size:16.5px;transform:scaleX(0.9254);color:#111;">PRIVATE PATIENT 00</span></div><span class="t" style="left:74.51px;top:365px;font-size:16.5px;transform:scaleX(1.0276);color:#111;">Booked</span><span class="t" style="left:74.79px;top:387px;font-size:16.5px;transform:scaleX(1.0484);color:#111;">Consultation</span><span class="t" style="left:271.78px;top:365px;font-size:16.5px;transform:scaleX(0.9154);color:#111;">GPD79</span><span class="t" style="left:335.15px;top:365px;font-size:16.5px;transform:scaleX(0.9577);color:#111;">FN00000026</span><div class="cl" style="left:425px;top:348px;width:228.20px;height:58.00px"><span class="t" style="left:2.86px;top:17px;font-size:16.5px;transform:scaleX(0.9405);font-weight:bold;color:#111;">MS TAYLOR, N, NANDA</span></div><div class="cl" style="left:426px;top:370px;width:227.20px;height:58.00px"><span class="t" style="left:2.22px;top:17px;font-size:16.5px;transform:scaleX(0.9598);color:#111;">064172983 Female Age: 24 years</span></div><span class="t" style="left:653.76px;top:365px;font-size:16.5px;transform:scaleX(0.9173);color:#111;">PRACTITIONER:</span><span class="t" style="left:653.81px;top:387px;font-size:16.5px;transform:scaleX(0.8839);color:#111;">DR GP GROBELAARS</span><span class="t" style="left:881.24px;top:365px;font-size:16.5px;transform:scaleX(0.9391);font-weight:bold;color:#111;">TAYLOR, N, NANDA</span><span class="t" style="left:880.26px;top:387px;font-size:16.5px;transform:scaleX(0.9135);color:#111;">DISCOVERY 478521459</span><span class="t" style="left:74.51px;top:416px;font-size:16.5px;transform:scaleX(1.0276);color:#111;">Booked</span><span class="t" style="left:74.79px;top:438px;font-size:16.5px;transform:scaleX(1.0484);color:#111;">Consultation</span><span class="t" style="left:271.79px;top:416px;font-size:16.5px;transform:scaleX(0.9192);color:#111;">GPD136</span><span class="t" style="left:344.66px;top:416px;font-size:16.5px;transform:scaleX(0.9527);color:#111;">FN00000001</span><div class="cl" style="left:434px;top:399px;width:226.50px;height:58.00px"><span class="t" style="left:2.34px;top:17px;font-size:16.5px;transform:scaleX(0.9650);font-weight:bold;color:#111;">MR DLAMINI, V, VUSI</span></div><div class="cl" style="left:434px;top:421px;width:224.20px;height:58.00px"><span class="t" style="left:2.72px;top:17px;font-size:16.5px;transform:scaleX(0.9617);color:#111;">0831231231 Male Age: 42 years</span></div><span class="t" style="left:661.26px;top:416px;font-size:16.5px;transform:scaleX(0.9173);color:#111;">PRACTITIONER:</span><span class="t" style="left:661.31px;top:438px;font-size:16.5px;transform:scaleX(0.8839);color:#111;">DR GP GROBELAARS</span><span class="t" style="left:886.34px;top:416px;font-size:16.5px;transform:scaleX(0.9639);font-weight:bold;color:#111;">DLAMINI, V, VUSI</span><span class="t" style="left:886.26px;top:438px;font-size:16.5px;transform:scaleX(0.9154);color:#111;">DISCOVERY MP987987987</span><span class="t" style="left:74.51px;top:467px;font-size:16.5px;transform:scaleX(1.0276);color:#111;">Booked</span><span class="t" style="left:74.79px;top:488px;font-size:16.5px;transform:scaleX(1.0484);color:#111;">Consultation</span><span class="t" style="left:271.79px;top:467px;font-size:16.5px;transform:scaleX(0.9203);color:#111;">GPD122</span><span class="t" style="left:344.64px;top:467px;font-size:16.5px;transform:scaleX(0.9623);color:#111;">FN00000015</span><div class="cl" style="left:434px;top:450px;width:226.50px;height:58.00px"><span class="t" style="left:2.35px;top:17px;font-size:16.5px;transform:scaleX(0.9468);font-weight:bold;color:#111;">MR STEYN, M, MARUIS</span></div><div class="cl" style="left:434px;top:471px;width:224.20px;height:58.00px"><span class="t" style="left:2.72px;top:17px;font-size:16.5px;transform:scaleX(0.9617);color:#111;">0820000001 Male Age: 33 years</span></div><span class="t" style="left:661.26px;top:467px;font-size:16.5px;transform:scaleX(0.9173);color:#111;">PRACTITIONER:</span><span class="t" style="left:661.31px;top:488px;font-size:16.5px;transform:scaleX(0.8839);color:#111;">DR GP GROBELAARS</span><span class="t" style="left:886.65px;top:467px;font-size:16.5px;transform:scaleX(0.9440);font-weight:bold;color:#111;">STEYN, M, MARUIS</span><span class="t" style="left:886.27px;top:488px;font-size:16.5px;transform:scaleX(0.9086);color:#111;">DISCOVERY MS87654321</span><span class="t" style="left:74.51px;top:568px;font-size:16.5px;transform:scaleX(1.0276);color:#111;">Booked</span><span class="t" style="left:74.79px;top:589px;font-size:16.5px;transform:scaleX(1.0484);color:#111;">Consultation</span><span class="t" style="left:288.59px;top:568px;font-size:16.5px;transform:scaleX(0.9824);color:#111;">No File No.</span><span class="t" style="left:369.88px;top:568px;font-size:16.5px;transform:scaleX(0.9253);font-weight:bold;color:#111;">MR DE JAGER, B, BEN</span><span class="t" style="left:370.23px;top:589px;font-size:16.5px;transform:scaleX(0.9615);color:#111;">0821545454 Male Age: 41 years</span><span class="t" style="left:615.26px;top:568px;font-size:16.5px;transform:scaleX(0.9173);color:#111;">PRACTITIONER:</span><span class="t" style="left:615.31px;top:589px;font-size:16.5px;transform:scaleX(0.8839);color:#111;">DR GP GROBELAARS</span><span class="t" style="left:861.88px;top:568px;font-size:16.5px;transform:scaleX(0.9223);font-weight:bold;color:#111;">DE JAGER, B, BEN</span><span class="t" style="left:861.72px;top:589px;font-size:16.5px;transform:scaleX(0.9281);color:#111;">POLMED 524</span><span class="t" style="left:74.50px;top:720px;font-size:16.5px;transform:scaleX(1.0291);color:#111;">Booked</span><span class="t" style="left:74.79px;top:741px;font-size:16.5px;transform:scaleX(1.0193);color:#111;">Out of Office</span><span class="t" style="left:74.51px;top:872px;font-size:16.5px;transform:scaleX(1.0276);color:#111;">Booked</span><span class="t" style="left:74.79px;top:893px;font-size:16.5px;transform:scaleX(1.0484);color:#111;">Consultation</span><span class="t" style="left:271.79px;top:872px;font-size:16.5px;transform:scaleX(0.9349);color:#111;">GPD114</span><span class="t" style="left:344.64px;top:872px;font-size:16.5px;transform:scaleX(0.9627);color:#111;">FN00000023</span><div class="cl" style="left:434px;top:855px;width:226.50px;height:58.00px"><span class="t" style="left:2.36px;top:17px;font-size:16.5px;transform:scaleX(0.9382);font-weight:bold;color:#111;">MR JACOBUS, W, WIAN</span></div><div class="cl" style="left:434px;top:876px;width:224.20px;height:58.00px"><span class="t" style="left:2.72px;top:17px;font-size:16.5px;transform:scaleX(0.9617);color:#111;">0816067922 Male Age: 32 years</span></div><span class="t" style="left:661.26px;top:872px;font-size:16.5px;transform:scaleX(0.9173);color:#111;">PRACTITIONER:</span><span class="t" style="left:661.31px;top:893px;font-size:16.5px;transform:scaleX(0.8839);color:#111;">DR GP GROBELAARS</span><span class="t" style="left:885.93px;top:872px;font-size:16.5px;transform:scaleX(0.9338);font-weight:bold;color:#111;">JACOBUS, W, WIAN</span><span class="t" style="left:885.28px;top:893px;font-size:16.5px;transform:scaleX(0.9300);color:#111;">GEMS 1234522</span></div><header><div class="b" style="left:0.00px;top:57.00px;width:1901.00px;height:61.00px;background:#fff;"></div><div class="b" style="left:0.00px;top:118.00px;width:1901.00px;height:2.00px;background:#dedede;"></div><div class="b" style="left:0.00px;top:0.00px;width:1901.00px;height:56.00px;background:#3c8dbc;"></div><div class="b" style="left:0.00px;top:56.00px;width:1901.00px;height:1.00px;background:#a094d8;"></div><div class="b" style="left:212.00px;top:0.00px;width:893.00px;height:56.00px;background:#24a08b;"></div><div class="b" style="left:212.00px;top:0.00px;width:73.00px;height:56.00px;background:#1f8574;"></div><svg class="b" style="left:140.80px;top:2.00px" width="51.6" height="51.6" viewBox="-25.8 -25.8 51.6 51.6"><circle r="24.8" fill="#e9f1f6"/><path d="M0 0L-7.35 -22.64A23.8 23.8 0 0 1 7.35 -22.64Z" fill="#48b36b" stroke="#e9f1f6" stroke-width="1.1"/><path d="M0 0L7.35 -22.64A23.8 23.8 0 0 1 19.25 -13.99Z" fill="#26a38f" stroke="#e9f1f6" stroke-width="1.1"/><path d="M0 0L19.25 -13.99A23.8 23.8 0 0 1 23.80 0.00Z" fill="#0d85cc" stroke="#e9f1f6" stroke-width="1.1"/><path d="M0 0L23.80 0.00A23.8 23.8 0 0 1 19.25 13.99Z" fill="#5a5baa" stroke="#e9f1f6" stroke-width="1.1"/><path d="M0 0L19.25 13.99A23.8 23.8 0 0 1 7.35 22.64Z" fill="#a03c85" stroke="#e9f1f6" stroke-width="1.1"/><path d="M0 0L7.35 22.64A23.8 23.8 0 0 1 -7.35 22.64Z" fill="#e83e8f" stroke="#e9f1f6" stroke-width="1.1"/><path d="M0 0L-7.35 22.64A23.8 23.8 0 0 1 -19.25 13.99Z" fill="#e0333f" stroke="#e9f1f6" stroke-width="1.1"/><path d="M0 0L-19.25 13.99A23.8 23.8 0 0 1 -23.80 0.00Z" fill="#f26424" stroke="#e9f1f6" stroke-width="1.1"/><path d="M0 0L-23.80 0.00A23.8 23.8 0 0 1 -19.25 -13.99Z" fill="#f0931f" stroke="#e9f1f6" stroke-width="1.1"/><path d="M0 0L-19.25 -13.99A23.8 23.8 0 0 1 -7.35 -22.64Z" fill="#777777" stroke="#e9f1f6" stroke-width="1.1"/><circle r="1.6" fill="#e9f1f6"/><circle r="0.7" fill="#b8d8ee"/></svg><svg class="b" style="left:1336px;top:24.2px" width="13" height="8" viewBox="0 0 13 8"><path d="M1.2 0.9H11.3L6.25 6.6Z" fill="#fff" stroke="#fff" stroke-width="1.3" stroke-linejoin="round"/></svg><svg class="b" style="left:1508px;top:18px" width="19" height="19" viewBox="0 0 19 19"><circle cx="9.5" cy="5" r="5" fill="#fff"/><path d="M0 18.3V16A5.2 5.2 0 0 1 5.2 10.8H13.8A5.2 5.2 0 0 1 19 16V18.3Z" fill="#fff"/></svg><svg class="b" style="left:1656.1px;top:17.2px" width="20" height="20" viewBox="0 0 20 20"><path d="M12.35 16.06L12.18 18.53L7.82 18.53L7.65 16.06L5.93 15.07L3.70 16.15L1.53 12.38L3.58 10.99L3.58 9.01L1.53 7.62L3.70 3.85L5.93 4.93L7.65 3.94L7.82 1.47L12.18 1.47L12.35 3.94L14.07 4.93L16.30 3.85L18.47 7.62L16.42 9.01L16.42 10.99L18.47 12.38L16.30 16.15L14.07 15.07Z" fill="#fff" stroke="#fff" stroke-width="1.2" stroke-linejoin="round"/><circle cx="10" cy="10" r="2.8" fill="#3c8dbc"/></svg><svg class="b" style="left:1708.2px;top:17.8px" width="19" height="19" viewBox="0 0 19 19"><circle cx="9.45" cy="9.4" r="9.4" fill="#fff"/><rect x="8.3" y="5" width="2.3" height="2.3" fill="#3c8dbc"/><path d="M7.5 8.4H10.7V12.4H11.9V14H7.3V12.4H8.5V10H7.5Z" fill="#3c8dbc"/></svg><svg class="b" style="left:1809px;top:18.5px" width="20" height="17" viewBox="0 0 20 17"><path d="M6.6 1.2H3.4A2.2 2.2 0 0 0 1.2 3.4V13.6A2.2 2.2 0 0 0 3.4 15.8H6.6" fill="none" stroke="#c0473d" stroke-width="2.3" stroke-linecap="round"/><path d="M6.6 6.2H12V2.6L19.2 8.5L12 14.4V10.8H6.6Z" fill="#c0473d"/></svg><div class="b" style="left:6.00px;top:71.00px;width:56.50px;height:34.00px;background:#fff;box-shadow:0 0 4px 1px rgba(0,0,0,.55);"></div><div class="b" style="left:66.00px;top:71.00px;width:154.00px;height:34.00px;background:#fff;box-shadow:0 0 4px 1px rgba(0,0,0,.55);"></div><div class="b" style="left:1326.00px;top:71.00px;width:123.00px;height:34.00px;background:#fff;box-shadow:0 0 4px 1px rgba(0,0,0,.55);"></div><div class="b" style="left:1454.00px;top:71.00px;width:151.00px;height:34.00px;background:#fff;box-shadow:0 0 4px 1px rgba(0,0,0,.55);"></div><svg class="b" style="left:13px;top:85px" width="12" height="7" viewBox="0 0 12 7"><path d="M0.4 0.2H11.6L6 6.8Z" fill="#111"/></svg><svg class="b" style="left:74px;top:85px" width="12" height="7" viewBox="0 0 12 7"><path d="M0.4 0.2H11.6L6 6.8Z" fill="#111"/></svg><svg class="b" style="left:1333.4px;top:85px" width="12" height="7" viewBox="0 0 12 7"><path d="M0.4 0.2H11.6L6 6.8Z" fill="#111"/></svg><svg class="b" style="left:1462px;top:85px" width="12" height="7" viewBox="0 0 12 7"><path d="M0.4 0.2H11.6L6 6.8Z" fill="#111"/></svg><div class="b" style="left:225.00px;top:74.00px;width:147.00px;height:23.50px;background:#fff;border:1.5px solid #1a1a1a;box-sizing:border-box;"></div><svg class="b" style="left:351.2px;top:77.2px" width="14.4" height="14.4" viewBox="0 0 15 15"><circle cx="5.9" cy="5.9" r="4.5" fill="none" stroke="#222" stroke-width="2"/><path d="M9.3 9.3L13.6 13.6" stroke="#222" stroke-width="2.4" stroke-linecap="round"/></svg><div class="b" style="left:681.00px;top:69.00px;width:334.00px;height:38.00px;background:#f4f4f4;border:1px solid #ddd;box-sizing:border-box;border-radius:1.5px;"></div><div class="b" style="left:718.00px;top:69.00px;width:177.50px;height:38.00px;background:#fff;border:1px solid #ccc;box-sizing:border-box;box-shadow:inset 0 1px 1px rgba(0,0,0,.075);"></div><div class="b" style="left:975.50px;top:70.00px;width:1.00px;height:36.00px;background:#ddd;"></div><svg class="b" style="left:695px;top:79px" width="9" height="14" viewBox="0 0 9 14"><path d="M7.5 1.2L1.8 7L7.5 12.8" fill="none" stroke="#444" stroke-width="2.1"/></svg><svg class="b" style="left:991px;top:79px" width="9" height="14" viewBox="0 0 9 14"><path d="M1.5 1.2L7.2 7L1.5 12.8" fill="none" stroke="#444" stroke-width="2.1"/></svg><svg class="b" style="left:909.6px;top:78px" width="17" height="17" viewBox="0 0 17 17"><circle cx="8.3" cy="8.3" r="7" fill="none" stroke="#444" stroke-width="1.6"/><path d="M8.3 4V8.6L11.2 10.5" fill="none" stroke="#444" stroke-width="1.6" stroke-linecap="round"/></svg><div class="b" style="left:1025.00px;top:71.00px;width:38.00px;height:33.00px;background:#3c8dbc;border:1px solid #367fa9;box-sizing:border-box;"></div><svg class="b" style="left:1037px;top:79.3px;transform:scaleX(-1)" width="15" height="15" viewBox="0 0 15 15"><path d="M12.5 6A5.2 5.2 0 0 0 3.4 3.9" fill="none" stroke="#fff" stroke-width="2.7"/><path d="M2.5 9A5.2 5.2 0 0 0 11.6 11.1" fill="none" stroke="#fff" stroke-width="2.7"/><path d="M0.6 0.6V6.4H6.4Z M14.4 14.4V8.6H8.6Z" fill="#fff"/></svg><div class="b" style="left:1611.00px;top:71.00px;width:36.00px;height:33.00px;background:#3c8dbc;border:1px solid #367fa9;box-sizing:border-box;border-radius:3px;"></div><div class="b" style="left:1653.00px;top:71.00px;width:38.00px;height:33.00px;background:#3c8dbc;border:1px solid #367fa9;box-sizing:border-box;border-radius:3px;"></div><div class="b" style="left:1697.00px;top:71.00px;width:38.00px;height:33.00px;background:#3c8dbc;border:1px solid #367fa9;box-sizing:border-box;border-radius:3px;"></div><div class="b" style="left:1740.00px;top:71.00px;width:33.00px;height:33.00px;background:#3c8dbc;border:1px solid #367fa9;box-sizing:border-box;border-radius:3px;"></div><div class="b" style="left:1779.00px;top:71.00px;width:122.00px;height:33.00px;background:#3c8dbc;border:1px solid #367fa9;box-sizing:border-box;border-radius:3px;border-right:0;border-radius:3px 0 0 3px;width:116px;"></div><svg class="b" style="left:1622.5px;top:83.2px" width="13" height="4" viewBox="0 0 13 4"><circle cx="1.8" cy="2" r="1.5" fill="#fff"/><circle cx="6.5" cy="2" r="1.5" fill="#fff"/><circle cx="11.2" cy="2" r="1.5" fill="#fff"/></svg><svg class="b" style="left:1664.5px;top:78.2px" width="15" height="15" viewBox="0 0 15 15"><path d="M3.6 5V1.4H10.2L11.4 2.6V5" fill="none" stroke="#fff" stroke-width="1.7"/><path d="M1.6 5.2H13.4A1.4 1.4 0 0 1 14.8 6.6V10.8H12V8.6H3V10.8H0.2V6.6A1.4 1.4 0 0 1 1.6 5.2Z" fill="#fff"/><path d="M3.8 9.6H11.2V13.6H3.8Z" fill="none" stroke="#fff" stroke-width="1.6"/></svg><svg class="b" style="left:1708.5px;top:78.2px" width="15" height="15" viewBox="0 0 15 15"><circle cx="5.9" cy="5.9" r="4.5" fill="none" stroke="#fff" stroke-width="2.1"/><path d="M9.3 9.3L13.6 13.6" stroke="#fff" stroke-width="2.5" stroke-linecap="round"/></svg><svg class="b" style="left:1790.5px;top:78.4px" width="13" height="15" viewBox="0 0 13 15"><path d="M1.4 2.2H11.6A1.2 1.2 0 0 1 12.8 3.4V13.4A1.2 1.2 0 0 1 11.6 14.6H1.4A1.2 1.2 0 0 1 0.2 13.4V3.4A1.2 1.2 0 0 1 1.4 2.2Z" fill="#fff"/><path d="M1.8 5.8H11.2V13H1.8Z" fill="#3c8dbc"/><path d="M3.4 0.4V3M9.6 0.4V3" stroke="#fff" stroke-width="1.6" stroke-linecap="round"/><path d="M6.5 7.2V11.6M4.3 9.4H8.7" stroke="#fff" stroke-width="1.5"/></svg><div class="cl" style="left:80px;top:-61px;width:600.00px;height:117.00px"><span class="t" style="left:2.56px;top:78px;font-size:78px;transform:scaleX(0.9564);font-family:'DejaVu Sans Light', 'DejaVu Sans', sans-serif;color:#4d4d4d;font-weight:200;">X</span></div><span class="t" style="left:13.48px;top:21px;font-size:33.5px;transform:scaleX(0.8391);font-weight:bold;font-style:italic;color:#fff;-webkit-text-stroke:1.3px #fff;">Good</span><span class="t" style="left:228.01px;top:17px;font-size:16.8px;transform:scaleX(1.0178);color:#fff;">Diary</span><span class="t" style="left:302.53px;top:17px;font-size:16.8px;transform:scaleX(0.9778);color:#fff;">Theatre Manager</span><span class="t" style="left:461.52px;top:17px;font-size:16.8px;transform:scaleX(1.0072);color:#fff;">Dashboard</span><span class="t" style="left:576.92px;top:17px;font-size:16.8px;transform:scaleX(1.0432);color:#fff;">Patient Identifier</span><span class="t" style="left:737.79px;top:17px;font-size:16.8px;transform:scaleX(1.0034);color:#fff;">Clinical Reports</span><span class="t" style="left:888.12px;top:17px;font-size:16.8px;transform:scaleX(1.0085);color:#fff;">Hospital Rounds</span><span class="t" style="left:1045.68px;top:17px;font-size:16.8px;transform:scaleX(1.0341);color:#fff;">Inbox</span><span class="t" style="left:1349.88px;top:17px;font-size:16.8px;transform:scaleX(0.8906);color:#fff;">1-DOCSTEAM GP</span><span class="t" style="left:1529.67px;top:17px;font-size:16.8px;transform:scaleX(1.0292);color:#fff;">Barry Admin</span><span class="t" style="left:1730.66px;top:17px;font-size:16.8px;transform:scaleX(1.0267);color:#fff;">About</span><span class="t" style="left:1830.51px;top:17px;font-size:16.8px;transform:scaleX(1.0132);color:#fff;">Logout</span><span class="t" style="left:33.90px;top:76px;font-size:16.0px;transform:scaleX(0.8977);color:#111;">GP</span><span class="t" style="left:94.08px;top:76px;font-size:16.0px;transform:scaleX(1.0491);color:#111;">Display Options</span><span class="t" style="left:1353.93px;top:76px;font-size:16.0px;transform:scaleX(1.0310);color:#111;">Diary Types</span><span class="t" style="left:1482.11px;top:76px;font-size:16.0px;transform:scaleX(1.0322);color:#111;">Render Policies</span><span class="t" style="left:229.82px;top:74px;font-size:12.9px;transform:scaleX(0.9869);color:#858585;">Filter bookings ...</span><span class="t" style="left:723.51px;top:76px;font-size:18.9px;transform:scaleX(1.0147);color:#555;">Mon 14th Apr 2025</span><span class="t" style="left:930.76px;top:74px;font-size:16.2px;transform:scaleX(0.9189);color:#444;">Now</span><span class="t" style="left:1751.25px;top:75px;font-size:16.8px;transform:scaleX(1.1190);font-weight:bold;color:#fff;">?</span><span class="t" style="left:1808.77px;top:75px;font-size:12.3px;transform:scaleX(1.0390);color:#fff;text-shadow:0 0 .5px #fff;">New Booking</span></header><div id="blob"></div><div class="b" style="left:1878.00px;top:120.00px;width:23.00px;height:941.00px;background:#fbfbfb;"></div><div class="b" style="left:0.00px;top:1061.00px;width:1901.00px;height:19.00px;background:#fbfbfb;"></div><div class="b" style="left:1886.00px;top:212.00px;width:11.00px;height:534.00px;background:#8b8b8b;border-radius:6px;"></div><div class="b" style="left:23.00px;top:1065.00px;width:1837.00px;height:11.00px;background:#8b8b8b;border-radius:6px;"></div><svg class="b" style="left:1885px;top:128px" width="13" height="7"><polygon points="0 7 6.5 0 13 7" fill="#8b8b8b"/></svg><svg class="b" style="left:7px;top:1064px" width="7.3" height="13"><polygon points="7.3 0 0 6.5 7.3 13" fill="#8b8b8b"/></svg><svg class="b" style="left:1887px;top:1064px" width="7.5" height="13"><polygon points="0 0 7.5 6.5 0 13" fill="#8b8b8b"/></svg></div><div class="b" style="left:1901.00px;top:0.00px;width:19.00px;height:1080.00px;background:#f9f9f9;"></div><div class="b" style="left:1905.50px;top:23.00px;width:10.50px;height:997.00px;background:#8b8b8b;border-radius:6px;"></div><svg class="b" style="left:1904.5px;top:8px" width="12.5" height="6.5"><polygon points="0 6.5 6.25 0 12.5 6.5" fill="#8b8b8b"/></svg><svg class="b" style="left:1904px;top:1046px" width="13" height="6.5"><polygon points="0 0 13 0 6.5 6.5" fill="#8b8b8b"/></svg></div></body></html>
